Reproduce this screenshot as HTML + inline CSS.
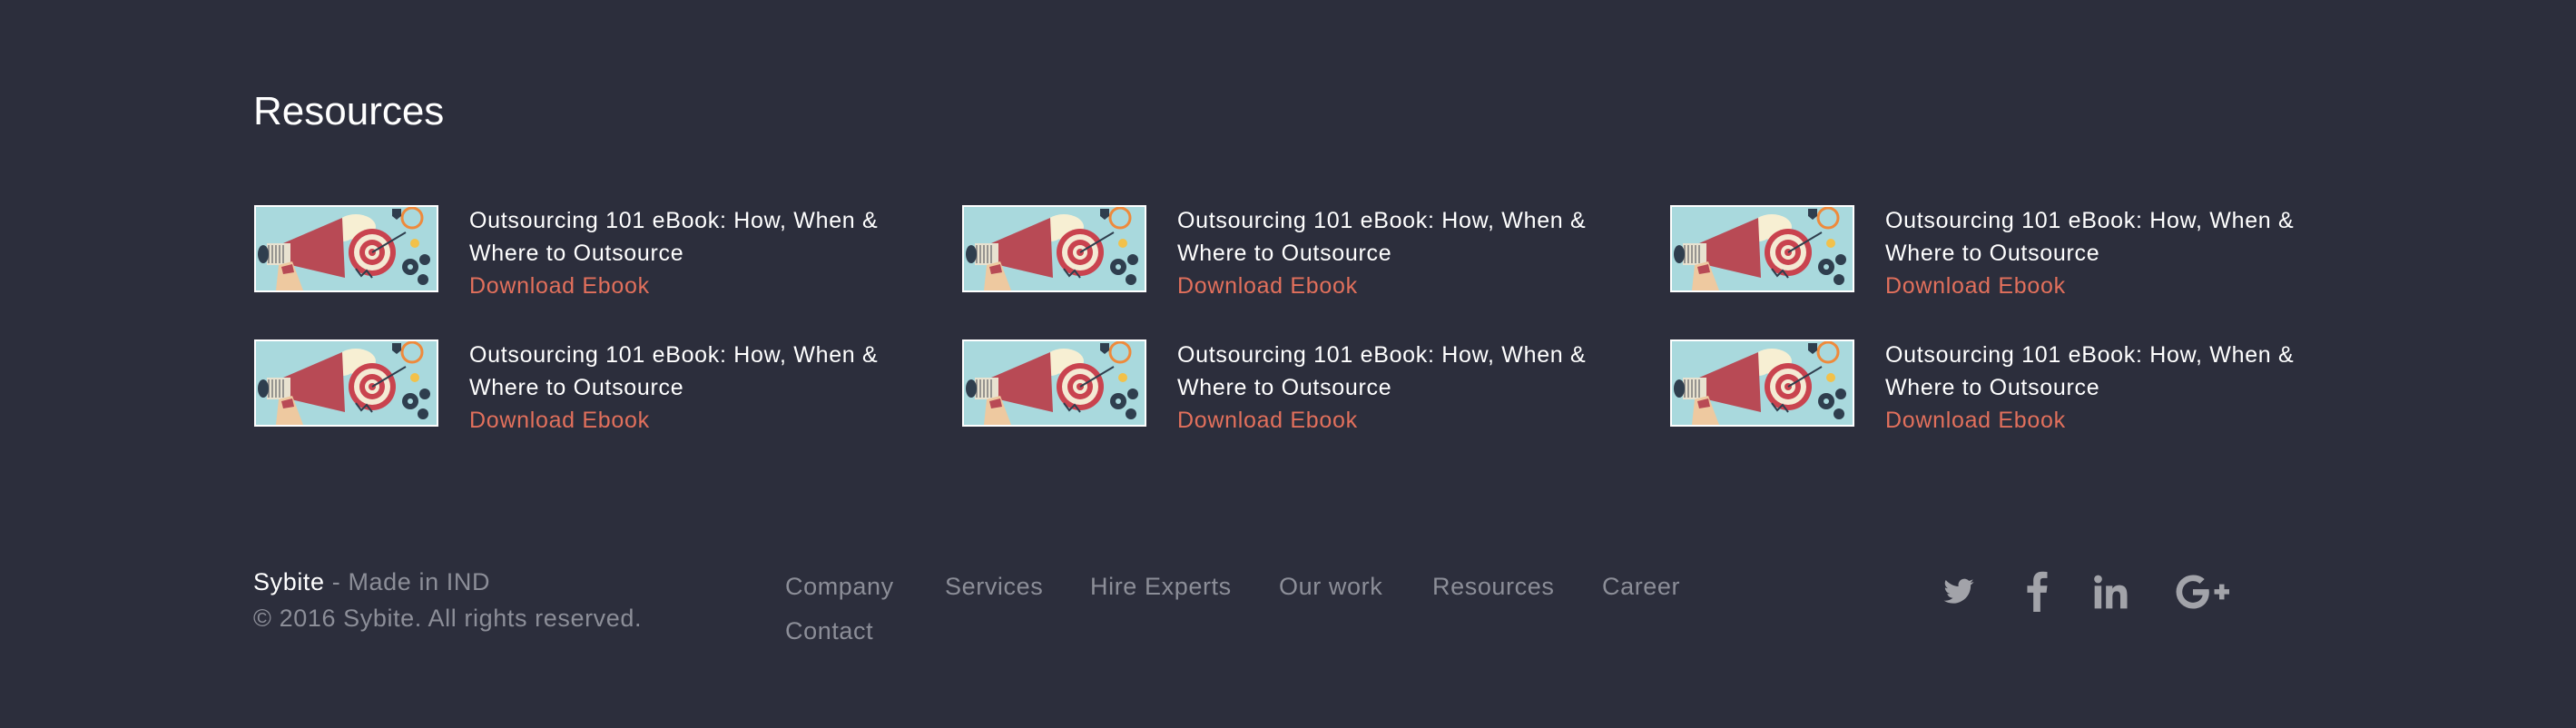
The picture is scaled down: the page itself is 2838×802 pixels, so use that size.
<!DOCTYPE html>
<html><head><meta charset="utf-8"><style>
html,body{margin:0;padding:0}
body{width:2838px;height:802px;background:#2c2e3c;position:relative;overflow:hidden;font-family:"Liberation Sans",sans-serif}
.a{position:absolute;white-space:nowrap}
h1{position:absolute;left:279px;top:95px;margin:0;font-weight:normal;color:#fff;font-size:44px;line-height:56px}
.thumb{position:absolute;width:199px;height:92px;border:2px solid #fff;background:#a9d9dd;overflow:hidden}
.t{position:absolute;color:#fff;font-size:25px;line-height:36px;letter-spacing:0.7px;white-space:nowrap}
.t span{color:#e2705c;display:block}
.nav{color:#8c8e98;font-size:27px;letter-spacing:0.6px}
</style></head><body>
<h1>Resources</h1>

<svg width="0" height="0" style="position:absolute">
<defs>
<symbol id="im" viewBox="0 0 199 92">
<rect width="199" height="92" fill="#a9d9dd"/>
<ellipse cx="110" cy="22" rx="22" ry="14" fill="#f7efd3"/>
<ellipse cx="95" cy="28" rx="14" ry="10" fill="#f7efd3"/>
<path d="M30 40 L95 12 L98 78 L30 62 Z" fill="#b84a55"/>
<rect x="12" y="40" width="26" height="24" fill="#e8e2d0"/>
<path d="M14 42v20M18 42v20M22 42v20M26 42v20M30 42v20" stroke="#7a7a7a" stroke-width="1.5"/>
<ellipse cx="8" cy="52" rx="6" ry="10" fill="#2f3e4e"/>
<path d="M25 64 L40 60 L52 92 L22 92 Z" fill="#eec9a0"/>
<path d="M28 66 L40 63 L42 72 L30 74 Z" fill="#b84a55"/>
<circle cx="128" cy="50" r="26" fill="#c9434f"/>
<circle cx="128" cy="50" r="20" fill="#f4ead4"/>
<circle cx="128" cy="50" r="14" fill="#c9434f"/>
<circle cx="128" cy="50" r="8" fill="#f4ead4"/>
<circle cx="128" cy="50" r="4" fill="#c9434f"/>
<path d="M128 50 L165 28" stroke="#2f3e4e" stroke-width="2"/>
<circle cx="172" cy="12" r="11" fill="none" stroke="#ee8a3c" stroke-width="3"/>
<circle cx="175" cy="40" r="5" fill="#f2c14a"/>
<circle cx="170" cy="66" r="9" fill="#2f3e4e"/><circle cx="170" cy="66" r="3" fill="#a9d9dd"/>
<circle cx="186" cy="58" r="6" fill="#2f3e4e"/><circle cx="184" cy="80" r="6" fill="#2f3e4e"/>
<path d="M110 68 l6 8 l6 -6 l6 8" stroke="#2f3e4e" stroke-width="2" fill="none"/>
<path d="M150 2 h10 v8 l-5 4 l-5 -4z" fill="#2f3e4e"/>
</symbol>
</defs></svg>

<div class="thumb" style="left:280px;top:226px"><svg width="199" height="92"><use href="#im"/></svg></div>
<div class="thumb" style="left:1060px;top:226px"><svg width="199" height="92"><use href="#im"/></svg></div>
<div class="thumb" style="left:1840px;top:226px"><svg width="199" height="92"><use href="#im"/></svg></div>
<div class="thumb" style="left:280px;top:374px"><svg width="199" height="92"><use href="#im"/></svg></div>
<div class="thumb" style="left:1060px;top:374px"><svg width="199" height="92"><use href="#im"/></svg></div>
<div class="thumb" style="left:1840px;top:374px"><svg width="199" height="92"><use href="#im"/></svg></div>

<div class="t" style="left:517px;top:225px">Outsourcing 101 eBook: How, When &amp;<br>Where to Outsource<span>Download Ebook</span></div>
<div class="t" style="left:1297px;top:225px">Outsourcing 101 eBook: How, When &amp;<br>Where to Outsource<span>Download Ebook</span></div>
<div class="t" style="left:2077px;top:225px">Outsourcing 101 eBook: How, When &amp;<br>Where to Outsource<span>Download Ebook</span></div>
<div class="t" style="left:517px;top:373px">Outsourcing 101 eBook: How, When &amp;<br>Where to Outsource<span>Download Ebook</span></div>
<div class="t" style="left:1297px;top:373px">Outsourcing 101 eBook: How, When &amp;<br>Where to Outsource<span>Download Ebook</span></div>
<div class="t" style="left:2077px;top:373px">Outsourcing 101 eBook: How, When &amp;<br>Where to Outsource<span>Download Ebook</span></div>

<div class="a nav" style="left:279px;top:626px"><span style="color:#fff">Sybite</span> - Made in IND</div>
<div class="a nav" style="left:279px;top:666px">© 2016 Sybite. All rights reserved.</div>

<div class="a nav" style="left:865px;top:631px">Company</div>
<div class="a nav" style="left:1041px;top:631px">Services</div>
<div class="a nav" style="left:1201px;top:631px">Hire Experts</div>
<div class="a nav" style="left:1409px;top:631px">Our work</div>
<div class="a nav" style="left:1578px;top:631px">Resources</div>
<div class="a nav" style="left:1765px;top:631px">Career</div>
<div class="a nav" style="left:865px;top:680px">Contact</div>

<svg class="a" style="left:2138px;top:634px" width="40" height="36" viewBox="0 0 24 24"><path fill="#a2a3a9" d="M23 4.6c-.8.4-1.7.6-2.6.7.9-.6 1.6-1.4 2-2.5-.9.5-1.9.9-2.9 1.1a4.5 4.5 0 0 0-7.7 4.1C8.1 7.8 4.8 6 2.5 3.3c-1.3 2.1-.6 4.8 1.4 6.1-.7 0-1.4-.2-2-.6 0 2.2 1.5 4.1 3.6 4.5-.7.2-1.4.2-2 .1.6 1.8 2.300 3.1 4.2 3.1A9 9 0 0 1 1 18.4 12.8 12.8 0 0 0 20.7 7c.9-.6 1.7-1.4 2.3-2.4z"/></svg>
<svg class="a" style="left:2232px;top:628px" width="24" height="46" viewBox="0 0 12 24"><path fill="#a2a3a9" d="M8 24V13h3.5l.5-4H8V6.5C8 5.4 8.3 4.6 9.9 4.6H12V1.1C11.6 1 10.4.9 9 .9 6 .9 4 2.7 4 6v3H.5v4H4v11z"/></svg>
<svg class="a" style="left:2306px;top:632px" width="40" height="40" viewBox="0 0 24 24"><path fill="#a2a3a9" d="M1 8h4.5v15H1zM3.3 1a2.6 2.6 0 1 1 0 5.2 2.6 2.6 0 0 1 0-5.2zM8.5 8h4.3v2c.6-1.2 2.1-2.4 4.3-2.4 4.6 0 5.4 3 5.4 6.900V23H18v-7.4c0-1.8 0-4-2.4-4s-2.8 1.9-2.8 3.9V23H8.5z"/></svg>
<svg class="a" style="left:2396px;top:632px" width="60" height="40" viewBox="0 0 36 24"><path fill="#a2a3a9" d="M12 10.3v3.9h6.4c-.3 1.7-2 4.9-6.4 4.9a7.1 7.1 0 0 1 0-14.2c2.2 0 3.700.9 4.5 1.7l3.1-3A11 11 0 0 0 12 .9a11.1 11.1 0 0 0 0 22.2c6.4 0 10.7-4.5 10.7-10.9 0-.7-.1-1.3-.2-1.9zM36 10.3h-3.3V7h-3.3v3.3h-3.3v3.3h3.3V17h3.3v-3.4H36z"/></svg>
</body></html>
